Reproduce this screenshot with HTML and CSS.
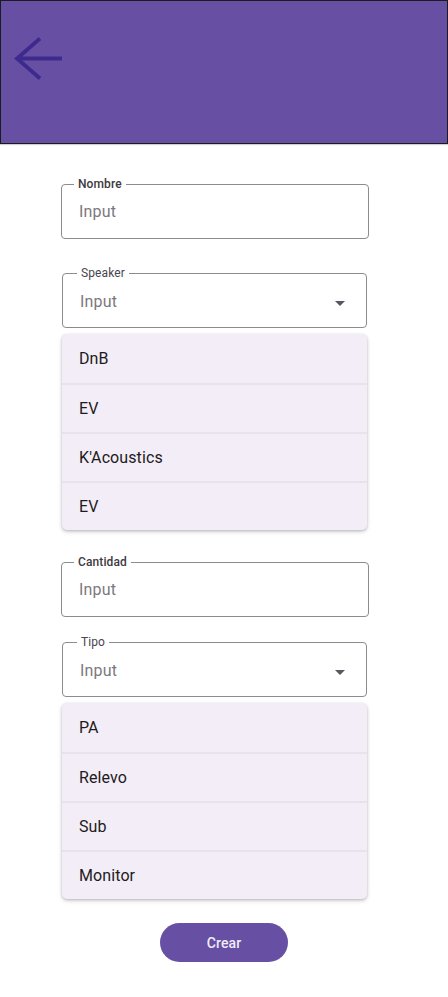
FILE: index.html
```html
<!DOCTYPE html>
<html lang="es">
<head>
<meta charset="utf-8">
<title>Crear</title>
<link rel="stylesheet" href="styles.css">
</head>
<body>
<header class="topbar">
  <svg class="back" width="52" height="48" viewBox="0 0 52 48" aria-hidden="true">
    <path d="M51 22.5 H6 M29 2.5 L6 22.5 L29 42.5" fill="none" stroke="#3e2a8e" stroke-width="3.8" stroke-linejoin="miter" stroke-linecap="butt"/>
  </svg>
</header>
<main class="form">
  <div class="field text nombre">
    <span class="label strong">Nombre</span>
    <span class="value">Input</span>
  </div>
  <div class="field select speaker">
    <span class="label">Speaker</span>
    <span class="value">Input</span>
    <span class="caret"></span>
  </div>
  <ul class="menu menu-speaker">
    <li>DnB</li>
    <li>EV</li>
    <li>K'Acoustics</li>
    <li>EV</li>
  </ul>
  <div class="field text cantidad">
    <span class="label strong">Cantidad</span>
    <span class="value">Input</span>
  </div>
  <div class="field select tipo">
    <span class="label">Tipo</span>
    <span class="value">Input</span>
    <span class="caret"></span>
  </div>
  <ul class="menu menu-tipo">
    <li>PA</li>
    <li>Relevo</li>
    <li>Sub</li>
    <li>Monitor</li>
  </ul>
  <div class="actions">
    <button class="btn">Crear</button>
  </div>
</main>
</body>
</html>
```
FILE: styles.css
```css
* { box-sizing: border-box; }
html, body { margin: 0; padding: 0; background: #ffffff; }
body {
  font-family: Roboto, "Noto Sans", Arial, sans-serif;
  color: #1d1b20;
  width: 448px;
}
.topbar {
  height: 144px;
  background: #6750a4;
  border: 1px solid #1c1b1f;
  box-shadow: 0 1px 1px rgba(0, 0, 0, 0.18);
  padding: 35px 0 0 10px;
}
.back { display: block; }

.form {
  display: flex;
  flex-direction: column;
  padding: 40px 0 0 61px;
  width: 369px;
}
.field {
  position: relative;
  height: 55px;
  border: 1px solid #8d8a90;
  border-radius: 4px;
  display: flex;
  align-items: center;
  padding-left: 17px;
}
.field.text { width: 308px; }
.field.select { width: 305px; margin-left: 1px; }
.label {
  position: absolute;
  top: -8px;
  left: 12px;
  padding: 0 4px;
  background: #ffffff;
  font-size: 12px;
  line-height: 15px;
  color: #49454f;
  letter-spacing: 0.1px;
}
.select .label { left: 14px; }
.label.strong { font-weight: 500; color: #3d3a41; }
.value {
  font-size: 16px;
  color: #7c7880;
  letter-spacing: 0.2px;
}
.select .value { padding-top: 1px; }
.caret {
  position: absolute;
  right: 21px;
  top: 27px;
  width: 0; height: 0;
  border-left: 5px solid transparent;
  border-right: 5px solid transparent;
  border-top: 5px solid #5a5660;
}
.nombre { margin-top: 0; }
.speaker { margin-top: 34px; }
.menu {
  list-style: none;
  margin: 6px 0 0 1px;
  padding: 0;
  width: 305px;
  background: #f3edf7;
  border-radius: 5px;
  box-shadow: 0 1px 3px rgba(0, 0, 0, 0.2), 0 2px 5px rgba(0, 0, 0, 0.12);
  overflow: hidden;
}
.menu li {
  height: 49px;
  display: flex;
  align-items: center;
  padding-left: 17px;
  font-size: 16px;
  color: #1d1b20;
  letter-spacing: 0.1px;
  border-top: 2px solid #e8e2eb;
}
.menu li:first-child { border-top: 0; }
.cantidad { margin-top: 32px; }
.tipo { margin-top: 25px; }
.menu-tipo { margin-top: 6px; }
.actions {
  display: flex;
  justify-content: center;
  margin-top: 24px;
  margin-left: -61px;
  width: 448px;
}
.btn {
  width: 128px;
  height: 39px;
  border: 0;
  border-radius: 20px;
  background: #6750a4;
  color: #f1ecf8;
  font-family: Roboto, "Noto Sans", Arial, sans-serif;
  font-size: 14px;
  font-weight: 500;
  letter-spacing: 0.1px;
}
```
